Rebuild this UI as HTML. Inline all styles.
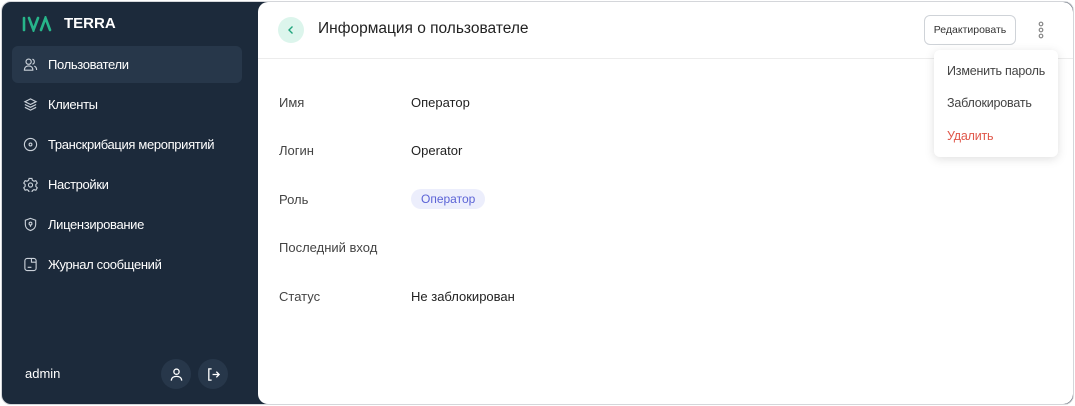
<!DOCTYPE html><html><head><meta charset="utf-8"><style>
*{box-sizing:border-box;margin:0;padding:0}
body{width:1075px;height:406px;background:#fff;font-family:"Liberation Sans",sans-serif;overflow:hidden;position:relative}
.frame{position:absolute;left:1px;top:1px;width:1073px;height:404px;border:1px solid #d4d6da;border-radius:10px;background:#1c2a3b;overflow:hidden}
.side{position:absolute;left:0;top:0;width:258px;height:100%;color:#fff}
.logo{position:absolute;left:20px;top:13px;display:flex;align-items:center;font-weight:bold;font-size:15px}
.nav{position:absolute;left:10px;top:44px;width:230px}
.it{height:37px;margin-bottom:3px;border-radius:6px;display:flex;align-items:center;padding-left:11px;font-size:13px;letter-spacing:-0.35px}
.it.a{background:#27374a}
.it svg{margin-right:10px;flex:none}
.main{position:absolute;left:256px;top:0;right:0;bottom:0;background:#fff;border-radius:10px}
.hdr{height:57px;border-bottom:1px solid #ececec;position:relative}
.back{position:absolute;left:20px;top:15px;width:26px;height:26px;border-radius:50%;background:#dcf5ec}
.title{position:absolute;left:60px;top:18px;font-size:15.5px;color:#222}
.btn{position:absolute;left:666px;top:13px;width:92px;height:30px;border:1px solid #cfd3d8;border-radius:6px;font-size:10.5px;color:#333;text-align:center;line-height:28px}
.row{position:absolute;left:21px;font-size:13px;color:#444}
.val{position:absolute;left:153px;font-size:13px;color:#222}
.tag{position:absolute;left:153px;top:187px;background:#eceefc;color:#5b63d6;font-size:12px;border-radius:10px;padding:3px 10px}
.menu{position:absolute;left:676px;top:48px;width:124px;height:107px;background:#fff;border-radius:6px;box-shadow:0 2px 10px rgba(0,0,0,.13);font-size:12.5px;color:#444;letter-spacing:-0.2px}
.menu div{position:absolute;left:13px}
.ub{position:absolute;top:357px;width:30px;height:30px;border-radius:50%;background:#27374a;display:flex;align-items:center;justify-content:center}
</style></head><body><div class="frame">
<div class="side">
<div class="logo"><svg width="36" height="16" viewBox="0 0 36 16"><g stroke="#27b58a" stroke-width="2.6" fill="none" stroke-linecap="round"><path d="M2 2v12"/><path d="M7 2l4.5 12L16 2"/><path d="M19 14l4.5-12L28 14"/></g></svg><span style="margin-left:6px">TERRA</span></div>
<div class="nav">
<div class="it a"><svg width="15" height="15" viewBox="0 0 16 16" fill="none" stroke="#c9d0d8" stroke-width="1.2"><circle cx="6" cy="5" r="2.8"/><path d="M1.5 14c0-3 2-4.5 4.5-4.5S10.5 11 10.5 14z"/><path d="M10 2.3a2.8 2.8 0 010 5.4M12 9.8c1.6.5 2.5 2 2.5 4"/></svg>Пользователи</div>
<div class="it"><svg width="15" height="15" viewBox="0 0 16 16" fill="none" stroke="#c9d0d8" stroke-width="1.2"><path d="M8 2l6 3-6 3-6-3z"/><path d="M2 8l6 3 6-3M2 11l6 3 6-3"/></svg>Клиенты</div>
<div class="it"><svg width="15" height="15" viewBox="0 0 16 16" fill="none" stroke="#c9d0d8" stroke-width="1.2"><circle cx="8" cy="8" r="6.5"/><circle cx="8" cy="8" r="1.5"/></svg>Транскрибация мероприятий</div>
<div class="it"><svg width="15" height="15" viewBox="0 0 16 16" fill="none" stroke="#c9d0d8" stroke-width="1.2"><path d="M6.5 1.5h3l.5 2 1.7 1 2-.6 1.5 2.6-1.5 1.5v2l1.5 1.5-1.5 2.6-2-.6-1.7 1-.5 2h-3l-.5-2-1.7-1-2 .6L.8 11.5 2.3 10V8L.8 6.5 2.3 3.9l2 .6 1.7-1z"/><circle cx="8" cy="8.5" r="2.2"/></svg>Настройки</div>
<div class="it"><svg width="15" height="15" viewBox="0 0 16 16" fill="none" stroke="#c9d0d8" stroke-width="1.2"><path d="M8 1.5l5.5 2v4.5c0 3.5-2.5 5.5-5.5 6.5-3-1-5.5-3-5.5-6.5V3.5z"/><circle cx="8" cy="7" r="1.5"/><path d="M8 8.5v2"/></svg>Лицензирование</div>
<div class="it"><svg width="15" height="15" viewBox="0 0 16 16" fill="none" stroke="#c9d0d8" stroke-width="1.2"><rect x="2" y="1.5" width="12" height="13" rx="2.5"/><path d="M5 11h4M9 1.5v4h5"/></svg>Журнал сообщений</div>
</div>
<div style="position:absolute;left:23px;top:364px;font-size:13px">admin</div>
<div class="ub" style="left:159px"><svg width="15" height="15" viewBox="0 0 16 16" fill="none" stroke="#fff" stroke-width="1.4"><circle cx="8" cy="5" r="2.8"/><path d="M2.5 14.5c0-3 2.5-4.5 5.5-4.5s5.5 1.5 5.5 4.5"/></svg></div>
<div class="ub" style="left:196px"><svg width="15" height="15" viewBox="0 0 16 16" fill="none" stroke="#fff" stroke-width="1.4"><path d="M6 2H3v12h3M7 8h7M11 5l3 3-3 3"/></svg></div>
</div>
<div class="main">
<div class="hdr"><div class="back"><svg width="26" height="26" viewBox="0 0 26 26" fill="none" stroke="#1fa57c" stroke-width="1.4"><path d="M14.5 9.5L11 13l3.5 3.5"/></svg></div>
<div class="title">Информация о пользователе</div>
<div class="btn">Редактировать</div>
<svg style="position:absolute;left:778px;top:19px" width="10" height="20" viewBox="0 0 10 20" fill="none" stroke="#888" stroke-width="1.2"><circle cx="5" cy="3" r="1.8"/><circle cx="5" cy="9" r="1.8"/><circle cx="5" cy="15" r="1.8"/></svg>
</div>
<div class="row" style="top:93px">Имя</div><div class="val" style="top:93px">Оператор</div>
<div class="row" style="top:141px">Логин</div><div class="val" style="top:141px">Operator</div>
<div class="row" style="top:190px">Роль</div><div class="tag">Оператор</div>
<div class="row" style="top:238px">Последний вход</div>
<div class="row" style="top:287px">Статус</div><div class="val" style="top:287px">Не заблокирован</div>
<div class="menu"><div style="top:14px">Изменить пароль</div><div style="top:46px">Заблокировать</div><div style="top:79px;color:#e0574a">Удалить</div></div>
</div>
</div></body></html>
